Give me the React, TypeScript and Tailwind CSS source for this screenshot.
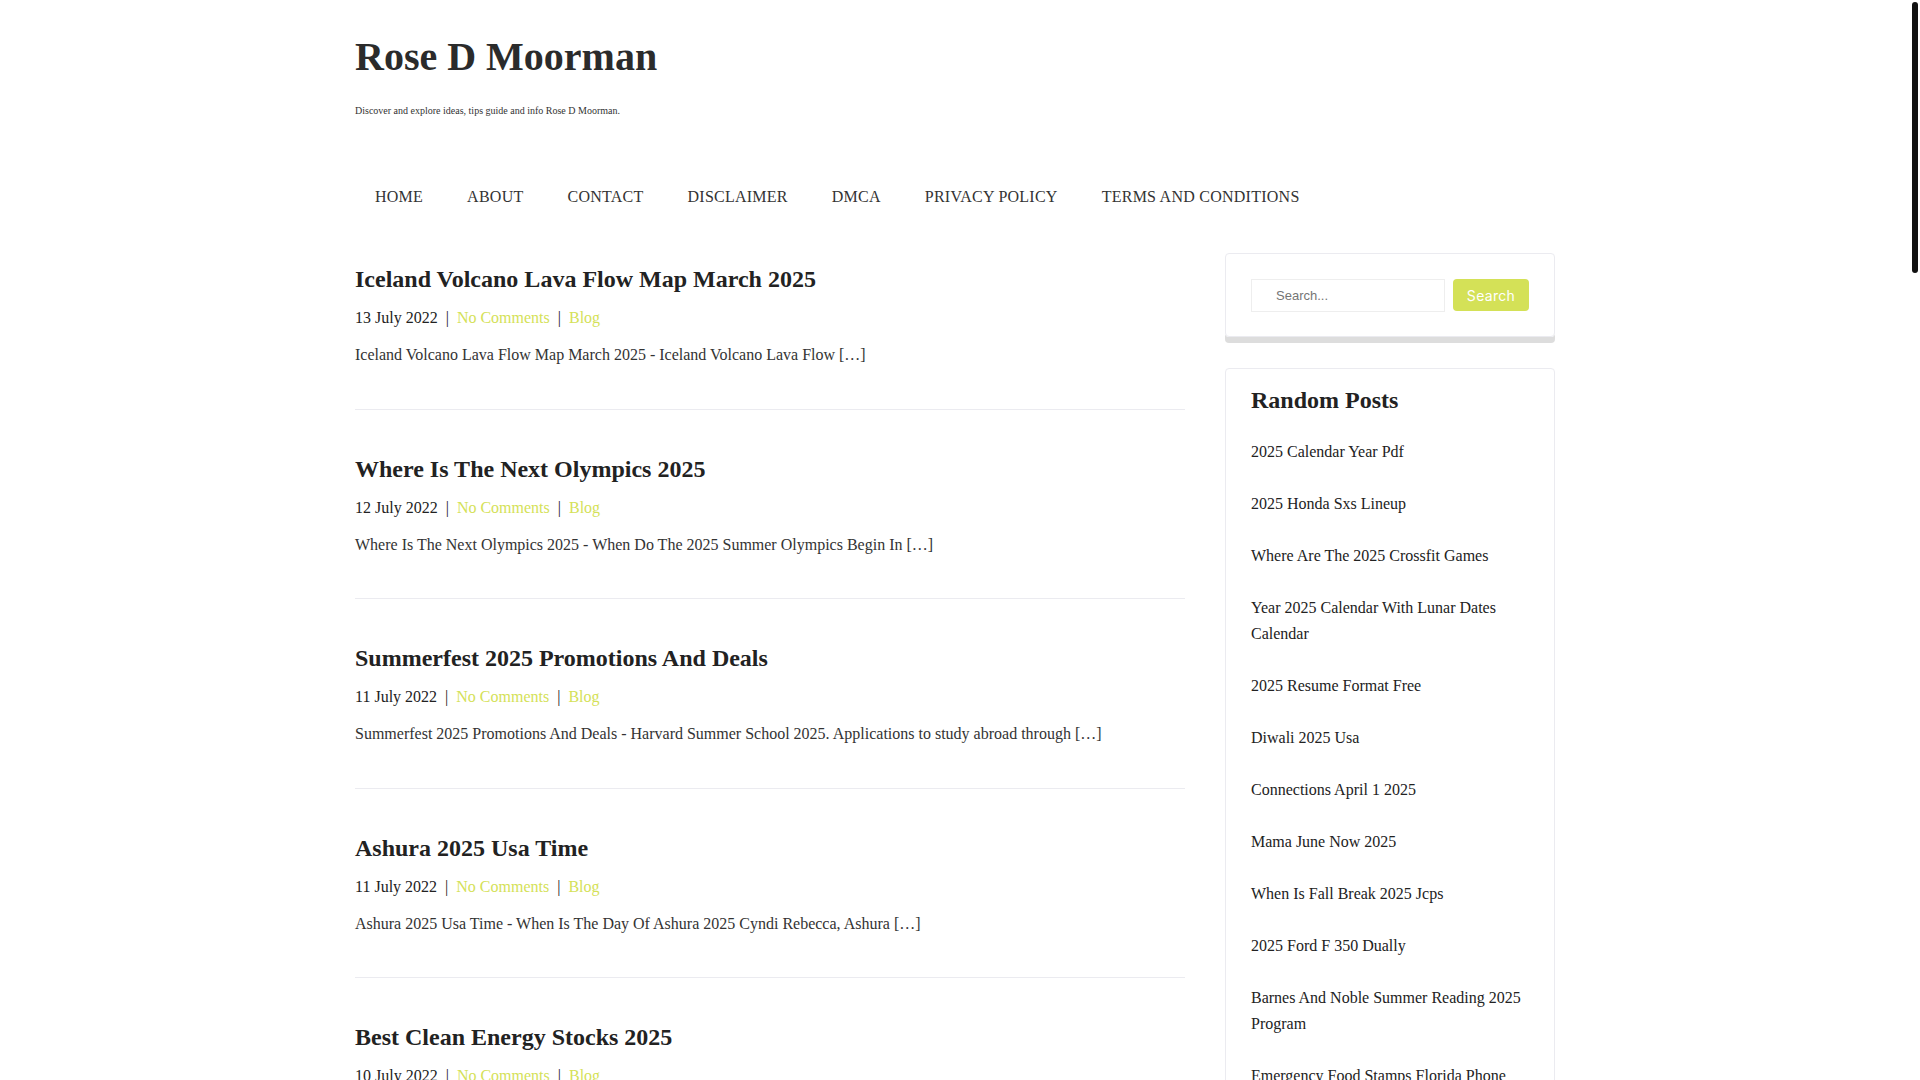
import React from 'react';

const posts = [
    {
        title: "Iceland Volcano Lava Flow Map March 2025",
        date: "13 July 2022",
        excerpt: "Iceland Volcano Lava Flow Map March 2025 - Iceland Volcano Lava Flow […]"
    },
    {
        title: "Where Is The Next Olympics 2025",
        date: "12 July 2022",
        excerpt: "Where Is The Next Olympics 2025 - When Do The 2025 Summer Olympics Begin In […]"
    },
    {
        title: "Summerfest 2025 Promotions And Deals",
        date: "11 July 2022",
        excerpt: "Summerfest 2025 Promotions And Deals - Harvard Summer School 2025. Applications to study abroad through […]"
    },
    {
        title: "Ashura 2025 Usa Time",
        date: "11 July 2022",
        excerpt: "Ashura 2025 Usa Time - When Is The Day Of Ashura 2025 Cyndi Rebecca, Ashura […]"
    },
    {
        title: "Best Clean Energy Stocks 2025",
        date: "10 July 2022",
        excerpt: "Best Clean Energy Stocks 2025 - Top Renewable Energy Stocks To Watch In 2025 […]"
    },
    {
        title: "Nfl Schedule 2025 Week 1",
        date: "10 July 2022",
        excerpt: "Nfl Schedule 2025 Week 1 - Nfl Week 1 Schedule 2025 Printable […]"
    },
    {
        title: "Easter Sunday 2025 Date",
        date: "9 July 2022",
        excerpt: "Easter Sunday 2025 Date - When Is Easter 2025 Calendar Date […]"
    },
    {
        title: "2025 Toyota Tacoma Trd Pro Price",
        date: "9 July 2022",
        excerpt: "2025 Toyota Tacoma Trd Pro Price - 2025 Toyota Tacoma Trd Pro Review […]"
    },
    {
        title: "Chinese New Year 2025 Animal",
        date: "8 July 2022",
        excerpt: "Chinese New Year 2025 Animal - Year Of The Snake 2025 Meaning […]"
    },
    {
        title: "Memorial Day Weekend 2025 Events",
        date: "8 July 2022",
        excerpt: "Memorial Day Weekend 2025 Events - Things To Do Memorial Day Weekend […]"
    },
    {
        title: "Best Budget Laptops 2025",
        date: "7 July 2022",
        excerpt: "Best Budget Laptops 2025 - The Best Cheap Laptops For 2025 […]"
    },
    {
        title: "Fafsa Deadline 2025 2026",
        date: "7 July 2022",
        excerpt: "Fafsa Deadline 2025 2026 - Important Fafsa Dates For Students […]"
    },
    {
        title: "Super Bowl 2025 Halftime Show",
        date: "6 July 2022",
        excerpt: "Super Bowl 2025 Halftime Show - Who Is Performing At The Super Bowl […]"
    },
    {
        title: "2025 Honda Cr V Hybrid",
        date: "6 July 2022",
        excerpt: "2025 Honda Cr V Hybrid - 2025 Honda Cr V Hybrid Specs And Price […]"
    },
    {
        title: "Spring Break 2025 Florida",
        date: "5 July 2022",
        excerpt: "Spring Break 2025 Florida - Best Spring Break Destinations In Florida […]"
    },
    {
        title: "Tax Brackets 2025 Married Filing Jointly",
        date: "5 July 2022",
        excerpt: "Tax Brackets 2025 Married Filing Jointly - Federal Income Tax Rates 2025 […]"
    },
    {
        title: "Coachella 2025 Lineup",
        date: "4 July 2022",
        excerpt: "Coachella 2025 Lineup - Coachella 2025 Dates And Headliners […]"
    },
    {
        title: "Ramadan 2025 Start Date",
        date: "4 July 2022",
        excerpt: "Ramadan 2025 Start Date - When Does Ramadan Start In 2025 […]"
    },
    {
        title: "2025 Kia Telluride Redesign",
        date: "3 July 2022",
        excerpt: "2025 Kia Telluride Redesign - 2025 Kia Telluride Release Date […]"
    },
    {
        title: "Hurricane Season 2025 Predictions",
        date: "3 July 2022",
        excerpt: "Hurricane Season 2025 Predictions - Atlantic Hurricane Season Outlook […]"
    }
]

const randomPosts = [
    "2025 Calendar Year Pdf",
    "2025 Honda Sxs Lineup",
    "Where Are The 2025 Crossfit Games",
    "Year 2025 Calendar With Lunar Dates Calendar",
    "2025 Resume Format Free",
    "Diwali 2025 Usa",
    "Connections April 1 2025",
    "Mama June Now 2025",
    "When Is Fall Break 2025 Jcps",
    "2025 Ford F 350 Dually",
    "Barnes And Noble Summer Reading 2025 Program",
    "Emergency Food Stamps Florida Phone Number 2025",
    "Chase Sapphire Reserve 2025 Benefits",
    "World Cup 2025 Schedule",
    "2025 Silverado 2500 Colors"
]

const menu = ["Home", "About", "Contact", "Disclaimer", "DMCA", "Privacy Policy", "Terms and Conditions"]

const App = () => {
    return (
        <div className="bg-white pr-[10px] font-['Liberation_Serif','Times_New_Roman',serif] text-[#333]">
            {/* scrollbar thumb of the page */}
            <div className="fixed top-[2px] right-[2px] h-[271px] w-[6px] rounded-[3px] bg-[#111]" />

            <header className="mx-auto w-[1200px] pt-[33px]">
                <h1 className="text-[40px] font-bold leading-[48px] text-[#2b2b2b]">Rose D Moorman</h1>
                <p className="mt-[22px] text-[10px] leading-[15px] text-[#333]">
                    Discover and explore ideas, tips guide and info Rose D Moorman.
                </p>
                <nav className="mt-[67px] flex gap-1">
                    {menu.map((m) => (
                        <a key={m} href="#" className="px-5 text-[16px] uppercase leading-6 tracking-[0.25px] text-[#333]">
                            {m}
                        </a>
                    ))}
                </nav>
            </header>

            <div className="mx-auto mt-[44px] flex w-[1200px] gap-10">
                <main className="w-[830px] shrink-0 pt-[11px]">
                    {posts.map((p) => (
                        <article key={p.title} className="border-b border-[#ebebf0] pt-[44px] pb-[41.5px] first:pt-0">
                            <h2 className="text-[24px] font-bold leading-[30px] text-[#222]">
                                <a href="#">{p.title}</a>
                            </h2>
                            <div className="mt-3 text-[16px] leading-6 text-[#222]">
                                <span>{p.date}</span>
                                <span className="mx-2">|</span>
                                <a href="#" className="text-[#d4e157]">No Comments</a>
                                <span className="mx-2">|</span>
                                <a href="#" className="text-[#d4e157]">Blog</a>
                            </div>
                            <p className="mt-[13px] text-[16px] leading-6 text-[#333]">{p.excerpt}</p>
                        </article>
                    ))}

                    <div className="mt-10 flex gap-2 text-[16px]">
                        <span className="flex h-9 w-9 items-center justify-center rounded bg-[#d4e157] text-white">1</span>
                        <a href="#" className="flex h-9 w-9 items-center justify-center rounded border border-[#ebebf0]">2</a>
                        <a href="#" className="flex h-9 w-9 items-center justify-center rounded border border-[#ebebf0]">3</a>
                        <a href="#" className="flex h-9 items-center justify-center rounded border border-[#ebebf0] px-3">Next »</a>
                    </div>
                </main>

                <aside className="w-[330px] shrink-0">
                    <div className="rounded-[4px] border border-[#ebebf0] px-[25px] pt-[25px] pb-[24px] shadow-[0_6px_0_#dddddd]">
                        <form className="flex gap-2" onSubmit={(e) => e.preventDefault()}>
                            <input
                                type="search"
                                placeholder="Search..."
                                className="h-[33px] min-w-0 flex-1 border border-[#eeeeee] pl-6 font-['Liberation_Sans',Arial,sans-serif] text-[13px] text-[#333] outline-none placeholder:text-[#757575]"
                            />
                            <button className="h-[32px] w-[76px] rounded-[4px] bg-[#d4e157] font-['Inter',sans-serif] text-[14px] tracking-[0.3px] text-white">
                                Search
                            </button>
                        </form>
                    </div>

                    <div className="mt-[31px] rounded-[4px] border border-[#ebebf0] px-[25px] pt-4 pb-4">
                        <h2 className="text-[24px] font-bold leading-[30px] text-[#222]">Random Posts</h2>
                        <ul className="mt-[11px]">
                            {randomPosts.map((r) => (
                                <li key={r} className="py-[13px] text-[16px] leading-[26px] text-[#222]">
                                    <a href="#">{r}</a>
                                </li>
                            ))}
                        </ul>
                    </div>
                </aside>
            </div>

            <footer className="mt-16 border-t border-[#ebebf0] py-10">
                <div className="mx-auto w-[1200px] text-center text-[14px] text-[#333]">
                    Copyright © 2025 Rose D Moorman. All rights reserved.
                </div>
            </footer>
        </div>
    );
}

export default App
